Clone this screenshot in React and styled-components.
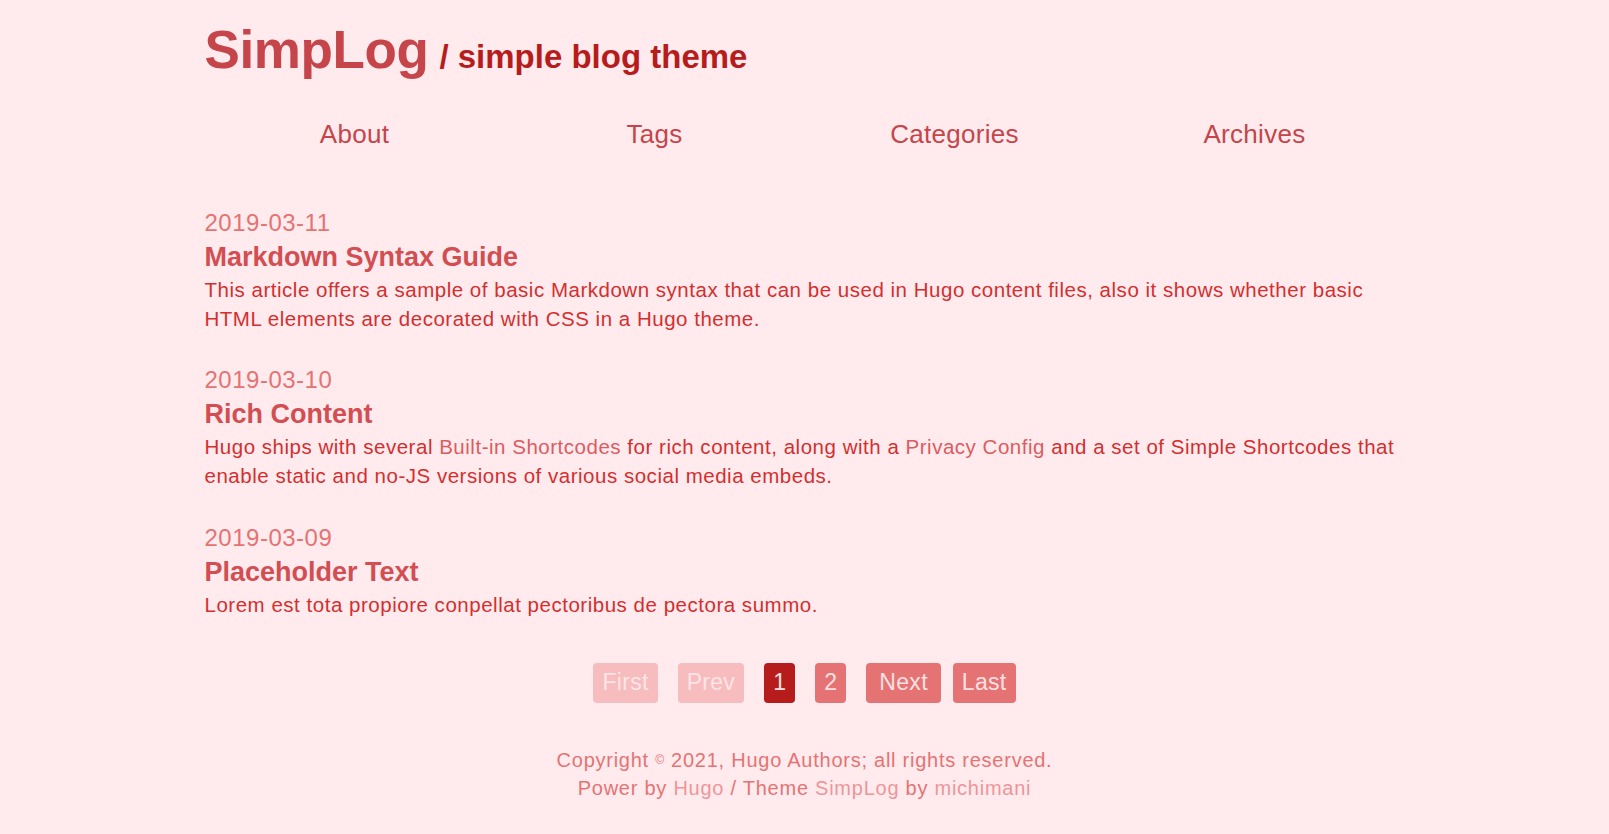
import React from "react";
import styled, { createGlobalStyle } from "styled-components";

const posts = [
	{
		date: "2019-03-11",
		title: "Markdown Syntax Guide",
		body: [
			"This article offers a sample of basic Markdown syntax that can be used in Hugo content files, also it shows whether basic HTML elements are decorated with CSS in a Hugo theme.",
		],
	},
	{
		date: "2019-03-10",
		title: "Rich Content",
		body: [
			"Hugo ships with several ",
			{ link: "Built-in Shortcodes" },
			" for rich content, along with a ",
			{ link: "Privacy Config" },
			" and a set of Simple Shortcodes that enable static and no-JS versions of various social media embeds.",
		],
	},
	{
		date: "2019-03-09",
		title: "Placeholder Text",
		body: ["Lorem est tota propiore conpellat pectoribus de pectora summo."],
	},
];

const pages = [
	{ label: "First", state: "disabled", pad: 9 },
	{ label: "Prev", state: "disabled", pad: 9 },
	{ label: "1", state: "active", pad: 9 },
	{ label: "2", pad: 9 },
	{ label: "Next", pad: 13 },
	{ label: "Last", pad: 9, tight: true },
];

function App() {
	return (
		<>
			<GlobalStyle />
			<Page>
				<Header>
					<SiteTitle href="#">SimpLog</SiteTitle>
					<SiteSub>/ simple blog theme</SiteSub>
				</Header>
				<Nav>
					{["About", "Tags", "Categories", "Archives"].map((n) => (
						<NavItem key={n} href="#">
							{n}
						</NavItem>
					))}
				</Nav>
				<Main>
					{posts.map((p) => (
						<Post key={p.date}>
							<PostDate>{p.date}</PostDate>
							<PostTitle href="#">{p.title}</PostTitle>
							<Summary>
								{p.body.map((part, i) =>
									typeof part === "string" ? (
										part
									) : (
										<InlineLink key={i} href="#">
											{part.link}
										</InlineLink>
									)
								)}
							</Summary>
						</Post>
					))}
				</Main>
				<Pager>
					{pages.map((pg) => (
						<PageButton
							key={pg.label}
							$state={pg.state}
							$pad={pg.pad}
							$tight={pg.tight}
						>
							{pg.label}
						</PageButton>
					))}
				</Pager>
				<Footer>
					<FooterLine>
						Copyright <Small>©</Small> 2021, Hugo Authors; all rights reserved.
					</FooterLine>
					<FooterLine>
						Power by <FooterLink href="#">Hugo</FooterLink> / Theme{" "}
						<FooterLink href="#">SimpLog</FooterLink> by{" "}
						<FooterLink href="#">michimani</FooterLink>
					</FooterLine>
				</Footer>
			</Page>
		</>
	);
}

const GlobalStyle = createGlobalStyle`
	html, body {
		margin: 0;
		padding: 0;
		background: #ffebee;
	}
	body {
		font-family: "Liberation Sans", Arial, sans-serif;
		color: #d32f2f;
	}
	a {
		text-decoration: none;
	}
`;

const Page = styled.div`
	width: 1200px;
	margin: 0 auto;
	min-height: 834px;
`;

const Header = styled.header`
	display: flex;
	align-items: baseline;
	gap: 11px;
	padding-top: 19px;
	height: 68px;
`;

const SiteTitle = styled.a`
	font-size: 53px;
	font-weight: 700;
	color: #c5454a;
	letter-spacing: -0.4px;
`;

const SiteSub = styled.span`
	font-size: 33px;
	font-weight: 700;
	color: #b71c1c;
`;

const Nav = styled.nav`
	display: grid;
	grid-template-columns: repeat(4, 1fr);
	margin-top: 31px;
`;

const NavItem = styled.a`
	text-align: center;
	font-size: 26px;
	letter-spacing: 0.3px;
	line-height: 32px;
	color: #c5454a;
`;

const Main = styled.main`
	display: flex;
	flex-direction: column;
	gap: 30px;
	margin-top: 56px;
`;

const Post = styled.article`
	display: flex;
	flex-direction: column;
`;

const PostDate = styled.div`
	font-size: 24px;
	letter-spacing: 0.5px;
	line-height: 34px;
	color: #e57373;
`;

const PostTitle = styled.a`
	font-size: 27px;
	font-weight: 700;
	line-height: 35px;
	color: #d24e52;
`;

const Summary = styled.p`
	margin: 1px 0 0;
	font-size: 20.5px;
	letter-spacing: 0.52px;
	line-height: 28.7px;
	color: #d32f2f;
`;

const InlineLink = styled.a`
	color: #dc5b60;
`;

const Pager = styled.div`
	display: flex;
	justify-content: center;
	gap: 20px;
	margin-top: 43px;
`;

const PageButton = styled.span`
	display: flex;
	align-items: center;
	height: 40px;
	padding: 0 ${(p) => p.$pad}px;
	margin-left: ${(p) => (p.$tight ? "-8px" : "0")};
	border-radius: 4px;
	font-size: 23px;
	letter-spacing: 0.3px;
	background: ${(p) =>
		p.$state === "disabled" ? "#f7bcbe" : p.$state === "active" ? "#b71c1c" : "#e57373"};
	color: ${(p) => (p.$state === "disabled" ? "#fde4e6" : "#fde0e2")};
`;

const Footer = styled.footer`
	display: flex;
	flex-direction: column;
	align-items: center;
	margin-top: 43px;
	padding-bottom: 30px;
`;

const FooterLine = styled.div`
	font-size: 20px;
	letter-spacing: 0.75px;
	line-height: 28.7px;
	color: #e57373;
`;

const Small = styled.span`
	font-size: 12px;
	vertical-align: 3px;
`;

const FooterLink = styled.a`
	color: #ee9599;
`;

export default App;
